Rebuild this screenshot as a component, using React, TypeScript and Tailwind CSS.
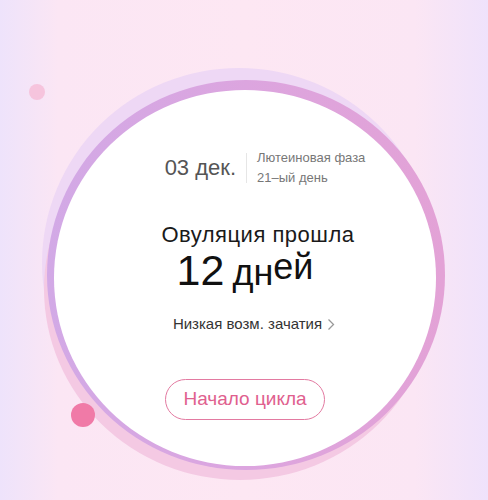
import React from "react";

export default function App() {
  return (
    <div
      className="relative w-[488px] h-[500px] overflow-hidden bg-[linear-gradient(90deg,#eee3fb_0%,#fbe6f4_12%,#fde7f3_50%,#fbe6f4_85%,#efe2fb_100%)]"
      style={{ fontFamily: '"Liberation Sans", Arial, sans-serif' }}
    >
      <svg className="absolute inset-0" width="488" height="500" viewBox="0 0 488 500">
        <defs>
          <linearGradient id="pur" x1="0" y1="0" x2="1" y2="0">
            <stop offset="0" stopColor="#d2a9e6" />
            <stop offset="0.5" stopColor="#dca5df" />
            <stop offset="1" stopColor="#e3a2d6" />
          </linearGradient>
        </defs>
        <circle cx="37" cy="92" r="8" fill="#f6c4dd" />
        <ellipse cx="239" cy="263" rx="197" ry="195" fill="#eed8f5" />
        <ellipse cx="240" cy="289" rx="196" ry="191" fill="#f4c9e3" />
        <ellipse cx="246" cy="275" rx="199" ry="195" fill="url(#pur)" />
        <ellipse cx="245" cy="278" rx="191" ry="188" fill="#ffffff" />
        <circle cx="83" cy="415" r="12" fill="#f07aa7" />
      </svg>

      <div className="relative flex flex-col items-center w-[490px] pt-[148px]">
        <div className="flex items-center ml-[40px]">
          <span className="text-[22px] leading-none text-[#555]">03 дек.</span>
          <div className="w-px h-[30px] bg-[#e6e6e6] mx-[10px]" />
          <div className="flex flex-col text-[13px] leading-[20px] text-[#777]">
            <span>Лютеиновая фаза</span>
            <span>21–ый день</span>
          </div>
        </div>

        <div className="mt-[35px] ml-[26px] text-[22px] leading-[24px] tracking-[0.5px] text-[#1a1a1a]">
          Овуляция прошла
        </div>

        <div className="-mt-[1px] flex items-baseline text-[#111]">
          <span className="text-[43px] leading-[48px]">12</span>
          <span className="ml-[8px] text-[36px] leading-[48px]">дн</span>
          <span className="text-[36px] leading-[48px] relative -top-[6px]">ей</span>
        </div>

        <div className="mt-[17px] ml-[18px] flex items-center text-[15px] leading-[20px] text-[#333]">
          <span>Низкая возм. зачатия</span>
          <svg className="ml-[5px]" width="8" height="13" viewBox="0 0 8 13">
            <path d="M1.5 1.5 L6.5 6.5 L1.5 11.5" fill="none" stroke="#999" strokeWidth="1.3" />
          </svg>
        </div>

        <button className="mt-[45px] w-[160px] h-[41px] rounded-full border-[1.5px] border-[#e37aa1] text-[19px] text-[#e0608e] bg-white">
          Начало цикла
        </button>
      </div>
    </div>
  );
}
